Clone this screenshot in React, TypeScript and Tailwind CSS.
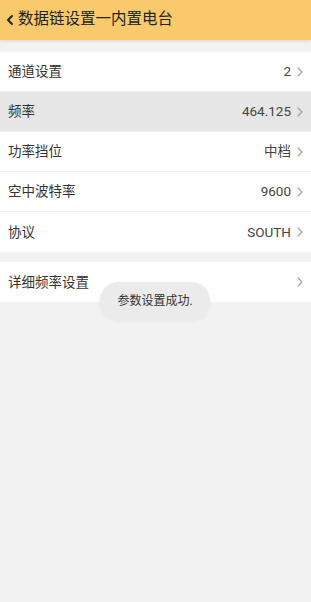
import { ChevronLeft, ChevronRight } from 'lucide-react'

type Row = { label: string; value?: string; active?: boolean }

const MAIN_ROWS: Row[] = [
  { label: '通道设置', value: '2' },
  { label: '频率', value: '464.125', active: true },
  { label: '功率挡位', value: '中档' },
  { label: '空中波特率', value: '9600' },
  { label: '协议', value: 'SOUTH' },
]

function SettingRow({ row, last }: { row: Row; last?: boolean }) {
  return (
    <div
      className={`flex h-10 items-center justify-between pl-2 pr-[3px] ${row.active ? 'bg-[#e6e6e6]' : 'bg-white'} ${last ? '' : 'border-b border-[#efefef]'}`}
    >
      <span className="text-[13.5px] text-[#333]">{row.label}</span>
      <div className="flex items-center gap-[1px]">
        {row.value && <span className="text-[13.5px] text-[#444]">{row.value}</span>}
        <ChevronRight size={16} strokeWidth={1.6} className="text-[#a0a0a0]" />
      </div>
    </div>
  )
}

export default function App() {
  return (
    <div
      className="relative flex h-[602px] w-[311px] flex-col overflow-hidden bg-[#f2f2f2]"
      style={{ fontFamily: 'Roboto, "Noto Sans CJK SC", sans-serif' }}
    >
      <div className="flex h-10 items-center bg-[#f8ca6b] pl-[2px] shadow-[0_1px_3px_rgba(0,0,0,0.12)]">
        <ChevronLeft size={16} strokeWidth={3} className="text-[#222]" />
        <span className="text-[15.5px] text-[#222]">数据链设置一内置电台</span>
      </div>

      <div className="mt-3 flex flex-col">
        {MAIN_ROWS.map((row, i) => (
          <SettingRow key={row.label} row={row} last={i === MAIN_ROWS.length - 1} />
        ))}
      </div>

      <div className="mt-[10px]">
        <SettingRow row={{ label: '详细频率设置' }} last />
      </div>

      <div className="absolute left-[100px] top-[282px] flex h-[38px] w-[110px] items-center justify-center rounded-full bg-[#ebebeb] shadow-[0_1px_4px_rgba(0,0,0,0.06)]">
        <span className="text-[12px] text-[#333]">参数设置成功.</span>
      </div>
    </div>
  )
}
